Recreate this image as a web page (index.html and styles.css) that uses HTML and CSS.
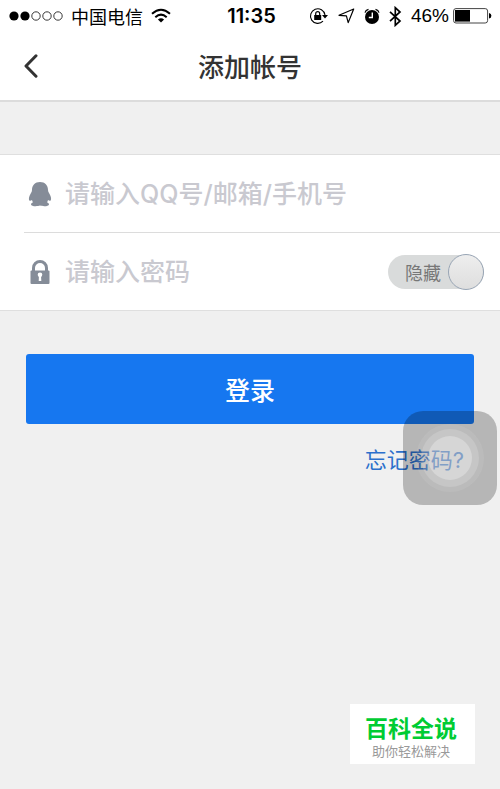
FILE: index.html
```html
<!DOCTYPE html>
<html lang="zh-CN">
<head>
<meta charset="utf-8">
<meta name="viewport" content="width=device-width, initial-scale=1">
<title>添加帐号</title>
<link rel="stylesheet" href="styles.css">
</head>
<body>
<header class="top">
  <div class="status">
    <div class="status-side">
      <svg width="54" height="12" viewBox="0 0 54 12" aria-hidden="true">
        <g fill="#000"><circle cx="5" cy="6" r="4.6"/><circle cx="16" cy="6" r="4.6"/></g>
        <g fill="none" stroke="#222" stroke-width=".9"><circle cx="27" cy="6" r="4.2"/><circle cx="38" cy="6" r="4.2"/><circle cx="49" cy="6" r="4.2"/></g>
      </svg>
      <span class="carrier">中国电信</span>
      <svg width="20" height="16" viewBox="0 0 20 16" fill="none" stroke="#000" stroke-width="2" aria-hidden="true">
        <path d="M1 5.700Q10-2.300 19 5.700"/><path d="M4.300 9.200Q10 4 15.700 9.200"/><path d="M10 14.600 6.900 11.600Q10 9 13.100 11.600Z" fill="#000" stroke="none"/>
      </svg>
    </div>
    <time class="clock">11:35</time>
    <div class="status-side status-right">
      <svg width="20" height="18" viewBox="0 0 20 18" aria-hidden="true">
        <path d="M14 14.200A7.300 7.300 0 1 1 16 8" fill="none" stroke="#000" stroke-width="1.100"/>
        <path d="M13 8h6l-3 3.400z"/><rect x="5.200" y="8" width="7" height="5"/><path d="M6.700 8.500V6.700a2 2 0 0 1 4 0v1.800" fill="none" stroke="#000" stroke-width="1.200"/>
      </svg>
      <svg width="17" height="16" viewBox="0 0 17 16" fill="none" stroke="#000" stroke-width="1.200" stroke-linejoin="round" aria-hidden="true"><path d="M15.700 1 1 7.300l7.400.5 1.800 6.800z"/></svg>
      <svg width="16" height="17" viewBox="0 0 16 17" aria-hidden="true">
        <circle cx="8" cy="9" r="7"/><path d="M1 4.600Q1.600 2 4.500 1.300M15 4.600Q14.400 2 11.500 1.300" fill="none" stroke="#000" stroke-width="1.200"/><path d="M8.300 4.500v5H4.800" fill="none" stroke="#fff" stroke-width="1.400"/>
      </svg>
      <svg width="13" height="21" viewBox="0 0 13 21" fill="none" stroke="#000" stroke-width="1.700" aria-hidden="true"><path d="M1 5.800 11 15l-4.700 4.300V1.700L11 6 1 15.200"/></svg>
      <span class="percent">46%</span>
      <svg class="battery" width="39" height="16" viewBox="0 0 39 16" aria-hidden="true">
        <rect x=".6" y=".6" width="34" height="14.400" rx="2.400" fill="none" stroke="#444"/><rect x="2" y="2" width="15" height="11.600"/><path d="M36 5q2.400.4 2.400 2.800T36 10.600z"/>
      </svg>
    </div>
  </div>
  <div class="nav">
    <button class="back" type="button" aria-label="返回">
      <svg width="14" height="24" viewBox="0 0 14 24" fill="none" stroke="#333" stroke-width="3" stroke-linecap="round" stroke-linejoin="round" aria-hidden="true"><path d="M12 1.800 2 12l10 10.200"/></svg>
    </button>
    <h1 class="title">添加帐号</h1>
  </div>
</header>
<main>
  <form>
    <div class="fields">
      <div class="row">
        <label class="icon" for="account" aria-label="帐号">
          <svg width="24" height="26" viewBox="0 0 24 26" fill="#858c98" aria-hidden="true"><path d="M12 1C7 1 4 4.500 4 9C4 11 2.500 12.500 1.500 15C.5 17.500.9 19.500 1.700 19.700C2.500 19.900 3.300 19.300 4 19C4.200 20 4.500 20.700 5 21.300C3.800 21.800 3 22.500 3 23.500C3 25.600 9.500 25.600 12 24.600C14.500 25.600 21 25.600 21 23.500C21 22.500 20.200 21.800 19 21.300C19.500 20.700 19.800 20 20 19C20.700 19.300 21.500 19.900 22.300 19.700C23.100 19.500 23.500 17.500 22.500 15C21.500 12.500 20 11 20 9C20 4.500 17 1 12 1Z"/></svg>
        </label>
        <input class="field" id="account" type="text" placeholder="请输入QQ号/邮箱/手机号">
      </div>
      <div class="row">
        <label class="icon" for="password" aria-label="密码">
          <svg width="24" height="26" viewBox="0 0 24 26" aria-hidden="true"><path d="M5.500 12V9a6.500 6.500 0 0 1 13 0v3" fill="none" stroke="#858c98" stroke-width="3"/><rect x="2.500" y="11.500" width="19" height="13.500" rx="1" fill="#858c98"/><circle cx="12" cy="15.700" r="2.300" fill="#fff"/><path d="M11 16h2l.3 6h-2.600z" fill="#fff"/></svg>
        </label>
        <input class="field" id="password" type="password" placeholder="请输入密码">
        <label class="switch"><input class="switch-input" type="checkbox" role="switch" checked><span class="switch-text">隐藏</span><span class="knob"></span></label>
      </div>
    </div>
    <div class="actions">
      <button class="login" type="submit">登录</button>
      <a class="forgot" href="#forgot">忘记密码?</a>
    </div>
  </form>
</main>
<button class="assist" type="button" aria-label="辅助触控"><span class="ring ring-outer"><span class="ring ring-middle"><span class="ring ring-inner"></span></span></span></button>
<aside class="brand"><strong class="brand-name">百科全说</strong><span class="brand-line">助你轻松解决</span></aside>
</body>
</html>
```
FILE: styles.css
```css
* { box-sizing: border-box; }

body {
  position: relative;
  min-height: 100vh;
  margin: 0;
  background: #f0f0f0;
  color: #333;
  font-family: Inter, "Noto Sans CJK SC", sans-serif;
}

button, input { font-family: inherit; }
svg { display: block; flex: none; }

.top {
  background: #fff;
  border-bottom: 2px solid #dcdcdc;
}

.status {
  display: grid;
  grid-template-columns: 1fr auto 1fr;
  align-items: center;
  height: 32px;
  padding: 0 8px 0 9px;
  color: #000;
}

.status-side {
  display: flex;
  align-items: center;
  gap: 8px;
}

.status-right {
  justify-content: flex-end;
  gap: 9px;
}

.carrier {
  font-family: "Noto Sans CJK SC", sans-serif;
  font-size: 18px;
  line-height: 24px;
}

.clock {
  padding-left: 2px;
  font-size: 20px;
  font-weight: 600;
}

.percent {
  font-family: "Liberation Sans", sans-serif;
  font-size: 19px;
}

.battery { margin-left: -5px; }

.nav {
  display: grid;
  grid-template-columns: 64px 1fr 64px;
  align-items: center;
  height: 68px;
}

.back {
  display: flex;
  align-items: center;
  height: 48px;
  padding: 0 24px;
  border: 0;
  background: none;
}

.title {
  margin: 0;
  font-family: "Noto Sans CJK SC", sans-serif;
  font-size: 26px;
  font-weight: 500;
  line-height: 38px;
  text-align: center;
}

.fields {
  margin-top: 52px;
  padding-left: 24px;
  border: solid #dfdfdf;
  border-width: 1px 0;
  background: #fff;
}

.row {
  display: flex;
  align-items: center;
  height: 77px;
  padding-right: 16px;
}

.row + .row {
  height: 78px;
  border-top: 1px solid #dcdcdc;
}

.icon { padding: 0 13px 0 4px; }

.field {
  flex: 1;
  min-width: 0;
  height: 48px;
  padding: 0;
  border: 0;
  outline: 0;
  background: none;
  color: #333;
  font-size: 25px;
  font-weight: 500;
}

.field::placeholder { color: #c9c9d0; }

.switch {
  position: relative;
  display: flex;
  align-items: center;
  width: 96px;
  height: 34px;
  padding-left: 17px;
  border-radius: 17px;
  background: #d9dbdb;
  color: #777;
  font-size: 18px;
}

.switch-input {
  position: absolute;
  inset: 0;
  width: 100%;
  height: 100%;
  margin: 0;
  opacity: 0;
}

.knob {
  position: absolute;
  top: -1px;
  right: 0;
  width: 36px;
  height: 36px;
  border: 1px solid #98a5b5;
  border-radius: 50%;
  background: linear-gradient(#eee, #dedede);
  pointer-events: none;
}

.switch-input:not(:checked) ~ .knob { right: 60px; }

.actions {
  display: flex;
  flex-direction: column;
  gap: 20px;
  padding: 43px 26px;
}

.login {
  height: 70px;
  border: 0;
  border-radius: 3px;
  background: #1677f0;
  color: #fff;
  font-size: 25px;
  font-weight: 500;
}

.forgot {
  align-self: flex-end;
  margin-right: 10px;
  color: #2c70cc;
  font-size: 22px;
  line-height: 32px;
  text-decoration: none;
}

.assist {
  position: absolute;
  top: 411px;
  right: 3px;
  display: grid;
  place-items: center;
  width: 94px;
  height: 94px;
  padding: 0;
  border: 0;
  border-radius: 20px;
  background: rgba(0, 0, 0, 0.24);
}

.ring {
  display: grid;
  place-items: center;
  border-radius: 50%;
}

.ring-outer {
  width: 68px;
  height: 68px;
  background: rgba(255, 255, 255, 0.08);
}

.ring-middle {
  width: 58px;
  height: 58px;
  background: rgba(255, 255, 255, 0.16);
}

.ring-inner {
  width: 44px;
  height: 44px;
  background: rgba(255, 255, 255, 0.28);
}

.brand {
  position: absolute;
  right: 25px;
  bottom: 25px;
  display: flex;
  flex-direction: column;
  align-items: center;
  width: 125px;
  height: 60px;
  padding: 10px 3px 0 0;
  background: #fff;
}

.brand-name {
  color: #0c3;
  font-size: 23px;
  font-weight: 700;
  line-height: 30px;
}

.brand-line {
  color: #999;
  font-size: 13px;
  line-height: 14px;
}
```
